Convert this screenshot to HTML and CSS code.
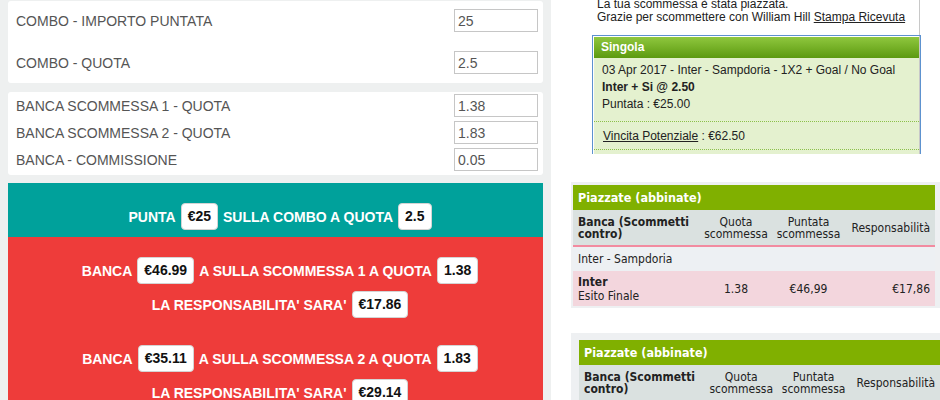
FILE: index.html
```html
<!DOCTYPE html>
<html lang="it">
<head>
<meta charset="utf-8">
<title>Calcolatore Combo</title>
<link rel="stylesheet" href="styles.css">
</head>
<body>
<div class="page">
  <div class="calc">
    <div class="panel p1">
      <div class="row"><span class="lbl">COMBO - IMPORTO PUNTATA</span><input class="inp" type="text" value="25"></div>
      <div class="row"><span class="lbl">COMBO - QUOTA</span><input class="inp" type="text" value="2.5"></div>
    </div>
    <div class="panel p2">
      <div class="row"><span class="lbl">BANCA SCOMMESSA 1 - QUOTA</span><input class="inp" type="text" value="1.38"></div>
      <div class="row"><span class="lbl">BANCA SCOMMESSA 2 - QUOTA</span><input class="inp" type="text" value="1.83"></div>
      <div class="row"><span class="lbl">BANCA - COMMISSIONE</span><input class="inp" type="text" value="0.05"></div>
    </div>
    <div class="res teal">
      <div class="line">PUNTA <span class="badge">€25</span> SULLA COMBO A QUOTA <span class="badge">2.5</span></div>
    </div>
    <div class="res red">
      <div class="block">
        <div class="line">BANCA <span class="badge">€46.99</span> A SULLA SCOMMESSA 1 A QUOTA <span class="badge">1.38</span></div>
        <div class="line">LA RESPONSABILITA' SARA' <span class="badge">€17.86</span></div>
      </div>
      <div class="block">
        <div class="line">BANCA <span class="badge">€35.11</span> A SULLA SCOMMESSA 2 A QUOTA <span class="badge">1.83</span></div>
        <div class="line">LA RESPONSABILITA' SARA' <span class="badge">€29.14</span></div>
      </div>
    </div>
  </div>
  <div class="side">
    <div class="receipt">
      <div class="msg">La tua scommessa è stata piazzata.<br>Grazie per scommettere con William Hill <a class="ul">Stampa Ricevuta</a></div>
      <div class="singola">
        <div class="sg-head">Singola</div>
        <div class="sg-body">
          <div class="sg-lines">
            <div>03 Apr 2017 - Inter - Sampdoria - 1X2 + Goal / No Goal</div>
            <div class="b">Inter + Si @ 2.50</div>
            <div>Puntata : €25.00</div>
          </div>
          <div class="sg-win"><span class="ul">Vincita Potenziale</span> : €62.50</div>
        </div>
      </div>
    </div>
    <div class="bx bx1">
      <table class="tb">
        <colgroup><col class="c1"><col class="c2"><col class="c3"><col class="c4"></colgroup>
        <tr class="cap"><td colspan="4">Piazzate (abbinate)</td></tr>
        <tr class="hd"><th class="l">Banca (Scommetti contro)</th><th>Quota scommessa</th><th>Puntata scommessa</th><th class="r">Responsabilità</th></tr>
        <tr class="ev"><td colspan="4">Inter - Sampdoria</td></tr>
        <tr class="pk"><td class="l"><b>Inter</b><br>Esito Finale</td><td>1.38</td><td>€46,99</td><td class="r">€17,86</td></tr>
      </table>
    </div>
    <div class="bx bx2">
      <table class="tb tb2">
        <colgroup><col class="c1"><col class="c2"><col class="c3"><col class="c4"></colgroup>
        <tr class="cap"><td colspan="4">Piazzate (abbinate)</td></tr>
        <tr class="hd"><th class="l">Banca (Scommetti contro)</th><th>Quota scommessa</th><th>Puntata scommessa</th><th class="r">Responsabilità</th></tr>
      </table>
    </div>
  </div>
</div>
</body>
</html>
```
FILE: styles.css
```css
html, body {
  margin: 0;
  height: 400px;
  overflow: hidden;
  background: #fff;
}
.page {
  display: flex;
  height: 400px;
}
.calc {
  width: 535px;
  padding: 1px 8px 0;
  background: #eef0f0;
  display: flex;
  flex-direction: column;
  overflow: hidden;
  font-family: "Liberation Sans", Arial, sans-serif;
}
.calc > * {
  flex-shrink: 0;
}
.panel {
  background: #fff;
  border-radius: 3px;
  display: flex;
  flex-direction: column;
  box-sizing: border-box;
}
.p1 {
  height: 82px;
  padding: 8px 5px 0 8px;
  gap: 19px;
}
.p2 {
  margin-top: 9px;
  height: 83px;
  padding: 2px 5px 0 8px;
  gap: 4px;
}
.row {
  display: flex;
  justify-content: space-between;
  align-items: center;
  height: 23px;
}
.lbl {
  font-size: 14px;
  color: #555;
}
.inp {
  width: 84px;
  height: 23px;
  box-sizing: border-box;
  border: 1px solid #c6c6c6;
  padding: 0 3px;
  margin: 0;
  font: 14px "Liberation Sans", Arial, sans-serif;
  color: #555;
  background: #fff;
  outline: none;
}
.res {
  color: #fff;
  font-weight: bold;
  font-size: 14px;
  padding-left: 9px;
}
.teal {
  margin-top: 8px;
  background: #00a19b;
  padding-top: 20px;
}
.red {
  background: #ee3c3a;
  flex: 1 0 auto;
}
.block {
  padding-top: 20px;
}
.line {
  height: 27px;
  margin-bottom: 7px;
  display: flex;
  justify-content: center;
  align-items: center;
  gap: 5px;
  white-space: nowrap;
}
.badge {
  background: #fff;
  color: #111;
  border: 1px solid #d4d4d4;
  border-radius: 4px;
  height: 27px;
  line-height: 25px;
  box-sizing: border-box;
  padding: 0 6px;
}
.side {
  flex: 1;
  font-family: "Liberation Sans", Arial, sans-serif;
}
.receipt {
  width: 368px;
  border-right: 1px solid #c8c8c8;
}
.msg {
  margin-top: -2px;
  padding-left: 46px;
  font-size: 12px;
  line-height: 13px;
  color: #222;
  height: 37px;
}
.ul {
  text-decoration: underline;
  color: #222;
}
.singola {
  margin-left: 41px;
  width: 325px;
  border: 1px solid #5d92cf;
  border-bottom: none;
  padding: 1px 1px 0;
}
.sg-head {
  height: 21px;
  line-height: 21px;
  background: linear-gradient(#8fc73e, #5c9a10);
  color: #fff;
  font-weight: bold;
  font-size: 12px;
  padding-left: 7px;
}
.sg-body {
  background: #e4f1cf;
  font-size: 12px;
  color: #222;
  padding-bottom: 4px;
}
.sg-lines {
  padding: 4px 0 8px 8px;
  line-height: 17px;
}
.b { font-weight: bold; }
.sg-win {
  border-top: 1px dotted #8cc04a;
  border-bottom: 1px dotted #8cc04a;
  padding: 6px 0 4px 9px;
  line-height: 17px;
}
.bx {
  margin-left: 20px;
  background: #eef0f2;
}
.bx1 {
  margin-top: 28px;
  padding: 3px 5px 2px 2px;
}
.bx2 {
  margin-top: 25px;
  padding: 7px 0 0 8px;
}
.tb {
  width: 362px;
  border-collapse: collapse;
  font-family: "DejaVu Sans Condensed", "DejaVu Sans", Verdana, sans-serif;
  font-stretch: condensed;
  font-size: 12px;
  color: #222;
}
.tb2 { width: 361px; }
.c1 { width: 127px; }
.c2 { width: 72px; }
.c3 { width: 73px; }
.c4 { width: 90px; }
.tb td, .tb th {
  padding: 0;
  text-align: center;
}
.cap td {
  background: #80b000;
  color: #fff;
  font-weight: bold;
  font-size: 12.5px;
  height: 25px;
  text-align: left;
  padding-left: 5px;
}
.hd th {
  background: #dae1e0;
  height: 35px;
  font-weight: normal;
  line-height: 12px;
  border-bottom: 2px solid #f28ba0;
}
.hd th.l {
  font-weight: bold;
  text-align: left;
  padding-left: 5px;
}
.tb .r {
  text-align: right;
  padding-right: 5px;
}
.ev td {
  background: #edf0f3;
  height: 24px;
  text-align: left;
  padding-left: 5px;
}
.pk td {
  background: #f3d6dd;
  height: 35px;
  line-height: 14px;
}
.pk td.l {
  text-align: left;
  padding-left: 5px;
}
.tb2 .hd th { border-bottom: none; }
```
